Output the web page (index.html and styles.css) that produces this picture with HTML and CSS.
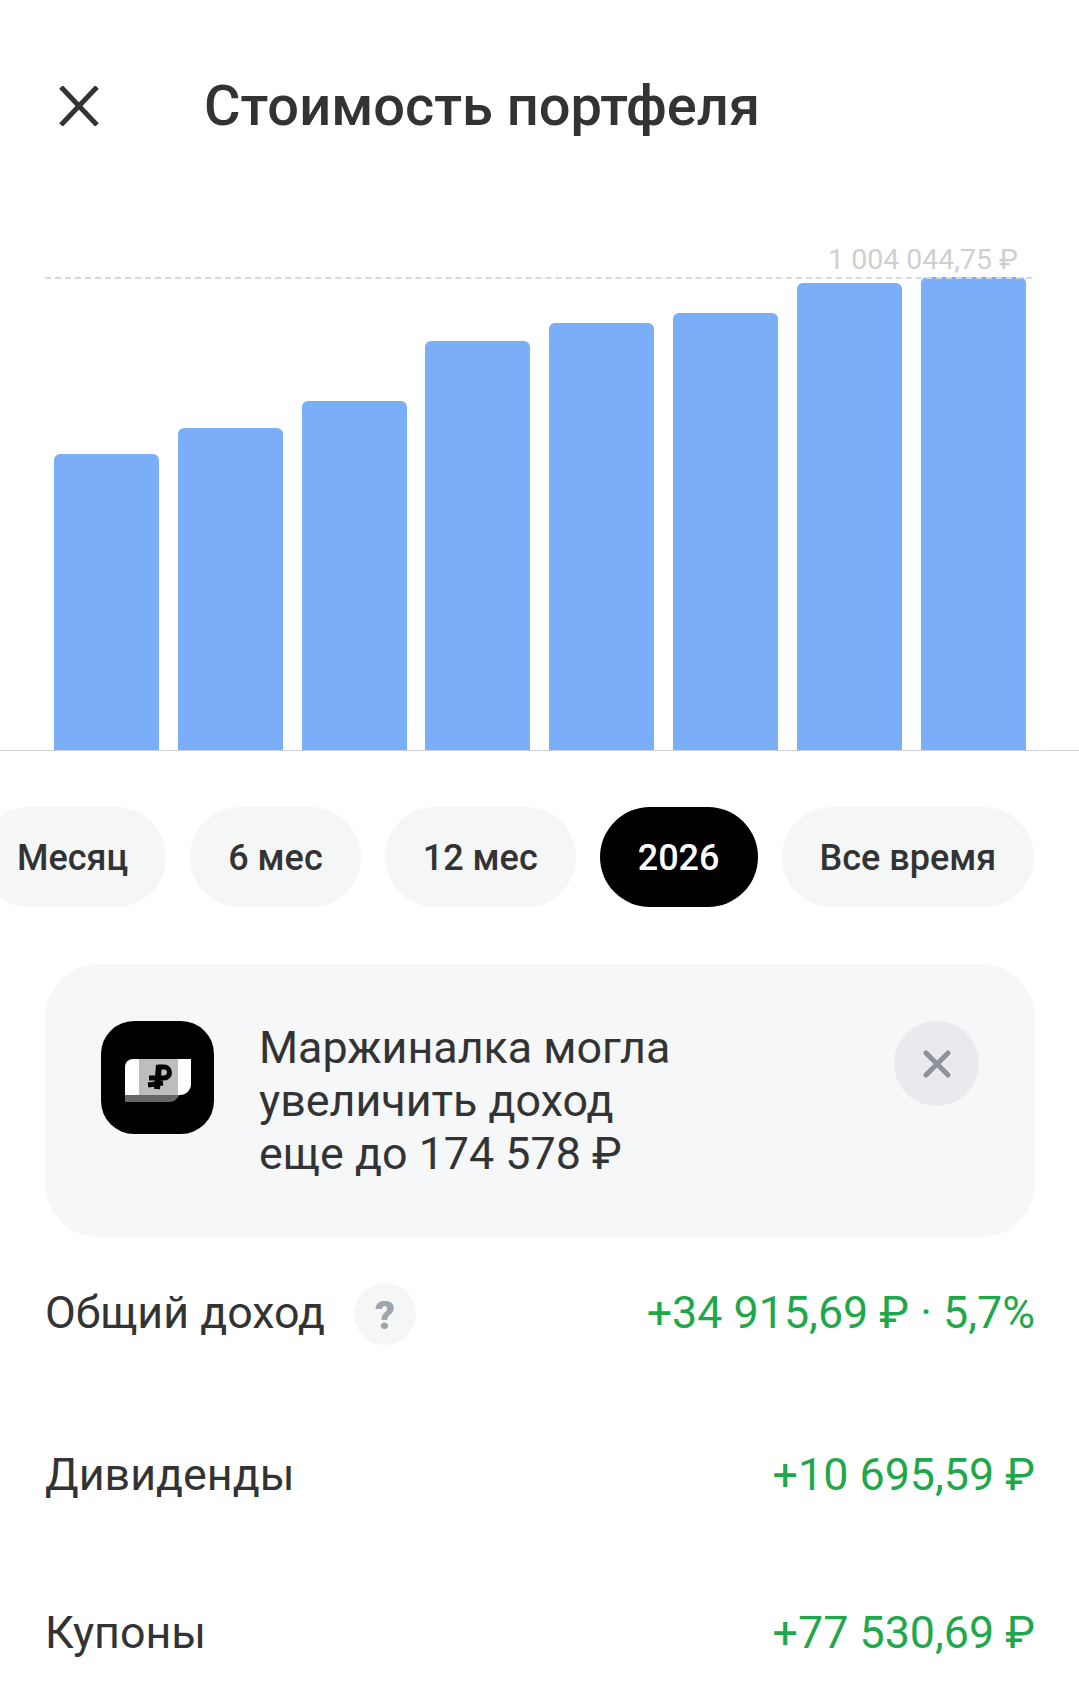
FILE: index.html
```html
<!DOCTYPE html>
<html lang="ru">
<head>
	<meta charset="UTF-8">
	<meta name="viewport" content="width=device-width, initial-scale=1.0">
	<title>Стоимость портфеля</title>
	<link rel="stylesheet" href="styles.css">
</head>
<body>
	<header class="header">
		<svg class="header-close" viewBox="0 0 40 40" width="40" height="40">
			<path d="M2 1 L38 39 M38 1 L2 39" />
		</svg>
		<h1 class="header-title">Стоимость портфеля</h1>
	</header>

	<section class="chart">
		<div class="chart-max">
			<span class="chart-label">1 004 044,75 ₽</span>
		</div>
		<div class="bars">
			<div class="bar" style="height: 296px"></div>
			<div class="bar" style="height: 322px"></div>
			<div class="bar" style="height: 349px"></div>
			<div class="bar" style="height: 409px"></div>
			<div class="bar" style="height: 427px"></div>
			<div class="bar" style="height: 437px"></div>
			<div class="bar" style="height: 467px"></div>
			<div class="bar" style="height: 473px"></div>
		</div>
	</section>

	<nav class="chips">
		<span class="chip">Месяц</span>
		<span class="chip">6 мес</span>
		<span class="chip">12 мес</span>
		<span class="chip chip-active">2026</span>
		<span class="chip">Все время</span>
	</nav>

	<section class="promo">
		<svg class="promo-icon" viewBox="0 0 113 113" width="113" height="113">
			<rect width="113" height="113" rx="33" fill="#000" />
			<path d="M24 70 H68 A11 11 0 0 0 79 59 V70 A11 11 0 0 1 68 81 H24 Z" fill="#666" />
			<path d="M32 38 H90 V63 A11 11 0 0 1 79 74 H24 V46 A8 8 0 0 1 32 38 Z" fill="#fff" />
			<path d="M38 38 H77 V74 H38 Z" fill="#bdbdbd" />
			<g fill="none" stroke="#000" stroke-width="5">
				<path d="M58 44 L56 68" stroke-width="6" />
				<path d="M57 46 H63 A5.5 5.5 0 0 1 63 57 H48" />
				<path d="M47 64 L62 62" />
			</g>
		</svg>
		<p class="promo-text">Маржиналка могла<br>увеличить доход<br>еще до 174 578 ₽</p>
		<button class="promo-close">
			<svg viewBox="0 0 28 28" width="28" height="28">
				<path d="M3 3 L25 25 M25 3 L3 25" />
			</svg>
		</button>
	</section>

	<div class="row row-first">
		<span class="row-name">Общий доход</span>
		<span class="help">?</span>
		<span class="row-value">+34 915,69 ₽ · 5,7%</span>
	</div>
	<div class="row row-second">
		<span class="row-name">Дивиденды</span>
		<span class="row-value">+10 695,59 ₽</span>
	</div>
	<div class="row">
		<span class="row-name">Купоны</span>
		<span class="row-value">+77 530,69 ₽</span>
	</div>
</body>
</html>
```

FILE: styles.css
```css
*,
*::before,
*::after {
	padding: 0;
	margin: 0;
	box-sizing: border-box;
}
html {
	height: 100%;
	overflow: hidden;
}
body {
	height: 100%;
	overflow: hidden;
	background: #fff;
	font-family: Roboto, "Liberation Sans", sans-serif;
	color: #333;
}

.header {
	display: flex;
	align-items: center;
	height: 212px;
	padding-left: 59px;
}
.header-close {
	flex: none;
	fill: none;
	stroke: #333;
	stroke-width: 5;
}
.header-title {
	margin-left: 105px;
	font-size: 56px;
	font-weight: 500;
	line-height: 1;
}

.chart {
	position: relative;
	height: 539px;
}
.chart-max {
	position: absolute;
	top: 65px;
	left: 45px;
	right: 47px;
	border-top: 2px dashed #d8d8d8;
}
.chart-label {
	position: absolute;
	right: 14px;
	bottom: 1px;
	font-size: 28.5px;
	line-height: 36px;
	color: #cfcfcf;
}
.bars {
	display: flex;
	align-items: flex-end;
	gap: 18.8px;
	height: 100%;
	padding-left: 54px;
	border-bottom: 1px solid #cfd1d4;
}
.bar {
	flex: none;
	width: 105px;
	border-radius: 6px 6px 0 0;
	background: #7baef8;
}

.chips {
	display: flex;
	gap: 24px;
	margin-top: 56px;
	margin-left: -21px;
}
.chip {
	flex: none;
	height: 100px;
	padding: 0 38px;
	border-radius: 50px;
	background: #f5f7f7;
	font-size: 36px;
	font-weight: 500;
	line-height: 102px;
	white-space: nowrap;
}
.chip-active {
	background: #000;
	color: #fff;
}

.promo {
	display: flex;
	align-items: flex-start;
	height: 273px;
	margin: 57px 44px 0 45px;
	padding: 57px 56px 0;
	border-radius: 54px;
	background: #f5f7f9;
}
.promo-icon {
	flex: none;
}
.promo-text {
	flex: 1;
	margin-left: 45px;
	font-size: 44.8px;
	line-height: 53px;
}
.promo-close {
	flex: none;
	display: flex;
	align-items: center;
	justify-content: center;
	width: 85px;
	height: 85px;
	border: none;
	border-radius: 50%;
	background: #e8eaed;
}
.promo-close svg {
	fill: none;
	stroke: #8e9299;
	stroke-width: 5;
	stroke-linecap: round;
}

.row {
	display: flex;
	align-items: center;
	height: 60px;
	margin: 0 44px 0 45px;
	font-size: 44.8px;
	white-space: nowrap;
}
.row-first {
	margin-top: 45px;
}
.row-second {
	margin-top: 102px;
	margin-bottom: 98px;
}
.row-value {
	margin-left: auto;
	color: #1fa84b;
}
.help {
	width: 62px;
	height: 62px;
	margin-top: 4px;
	margin-left: 29px;
	border-radius: 50%;
	background: #f5f7f7;
	color: #a0a4ab;
	font-size: 39px;
	font-weight: 900;
	line-height: 66px;
	text-align: center;
}
```
